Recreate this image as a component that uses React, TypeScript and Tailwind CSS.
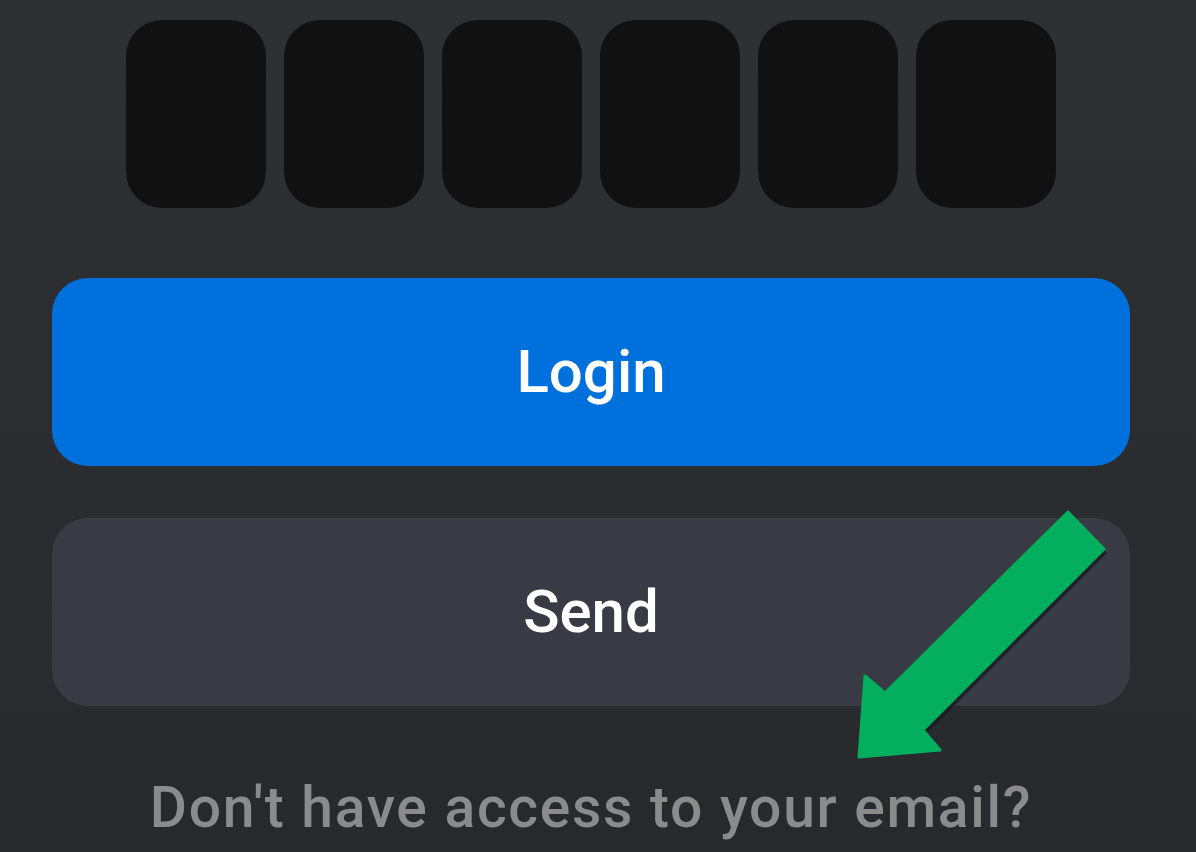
import { useState } from "react";

const font = { fontFamily: "Roboto, 'Noto Sans', Arial, sans-serif" };

export default function App() {
  const [code, setCode] = useState(["", "", "", "", "", ""]);

  return (
    <div
      className="relative h-[852px] w-[1196px] overflow-hidden bg-gradient-to-b from-[#2e3034] to-[#27292d]"
      style={font}
    >
      <div className="flex w-[1182px] flex-col items-center pt-[20px]">
        <div className="flex gap-[18px]">
          {code.map((c, i) => (
            <input
              key={i}
              value={c}
              maxLength={1}
              onChange={(e) => {
                const next = [...code];
                next[i] = e.target.value;
                setCode(next);
              }}
              className="h-[188px] w-[140px] rounded-[36px] bg-[#111111] text-center text-6xl text-white outline-none"
            />
          ))}
        </div>

        <button className="mt-[70px] flex h-[188px] w-[1078px] items-center justify-center rounded-[36px] bg-[#0070dd] text-[60px] font-medium text-white">
          Login
        </button>

        <button className="mt-[52px] flex h-[188px] w-[1078px] items-center justify-center rounded-[36px] bg-[#383b43] text-[60px] font-medium text-white">
          Send
        </button>

        <p className="mt-[73px] text-[57px] leading-none font-medium tracking-[1.7px] text-[#8b8b8b]">
          Don't have access to your email?
        </p>
      </div>

      {/* annotation arrow */}
      <svg className="pointer-events-none absolute inset-0" width="1196" height="852" viewBox="0 0 1196 852">
        <polygon
          points="1071,516 1107,553 927,733 900,700"
          fill="#16181b"
          opacity="0.7"
        />
        <polygon
          points="1068,512 1104,549 923,730 940,750 859,757 865,676 885,693"
          fill="#03ae5f"
          stroke="#03ae5f"
          strokeWidth="3"
          strokeLinejoin="round"
        />
      </svg>
    </div>
  );
}
